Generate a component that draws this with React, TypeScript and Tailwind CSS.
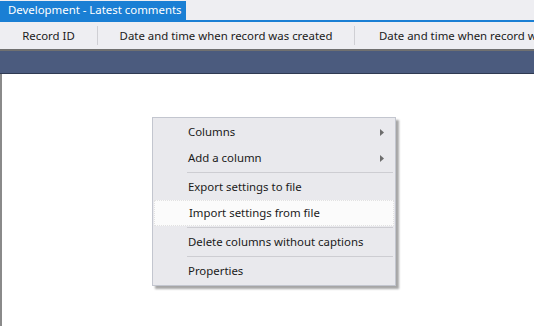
import React from 'react';

const font = { fontFamily: '"Noto Sans", "Open Sans", sans-serif' };

const Arrow: React.FC = () => (
  <svg width="4" height="7" viewBox="0 0 4 7" className="fill-[#6d6d6d]">
    <path d="M0 0 L4 3.5 L0 7 Z" />
  </svg>
);

type Item = { label: string; sub?: boolean; hot?: boolean; sep?: boolean };

const items: Item[] = [
  { label: 'Columns', sub: true },
  { label: 'Add a column', sub: true, sep: true },
  { label: 'Export settings to file' },
  { label: 'Import settings from file', hot: true, sep: true },
  { label: 'Delete columns without captions', sep: true },
  { label: 'Properties' },
];

const App: React.FC = () => {
  return (
    <div className="w-[534px] h-[326px] bg-white flex flex-col overflow-hidden text-[11.4px] text-[#1a1a1a] relative" style={font}>
      {/* tab strip */}
      <div className="h-[22px] shrink-0 bg-[#eeeef2] flex items-end border-b-2 border-[#1a7fd4]">
        <div className="h-[19px] w-[186px] shrink-0 bg-[#1a7fd4] text-white pl-[8px] leading-[18px] whitespace-nowrap overflow-hidden">
          Development - Latest comments
        </div>
      </div>

      {/* column headers, last one runs off the right edge */}
      <div className="h-[27px] shrink-0 bg-[#eeeef2] flex items-center whitespace-nowrap">
        <div className="w-[97px] shrink-0 text-center">Record ID</div>
        <div className="w-px shrink-0 h-[19px] bg-[#cfcfd4]" />
        <div className="w-[256px] shrink-0 text-center">Date and time when record was created</div>
        <div className="w-px shrink-0 h-[19px] bg-[#cfcfd4]" />
        <div className="pl-[24px] shrink-0">Date and time when record was created</div>
      </div>

      {/* band */}
      <div className="h-[25px] shrink-0 bg-[#4b5b7e] border-t-2 border-[#707070] border-b border-b-[#2f3a52]" />

      {/* body */}
      <div className="flex-1 border-l-2 border-[#8a8a8a]" />

      {/* context menu */}
      <div className="absolute left-[152px] top-[117px] w-[244px] bg-[#e9e9ed] border border-[#c3c6cf] shadow-[3px_3px_2px_rgba(0,0,0,0.35)] py-[1px]">
        {items.map((it) => (
          <div key={it.label}>
            <div
              className={`h-[26px] flex items-center pl-[34px] pr-[10px] mx-[1px] ${
                it.hot ? 'bg-[#fbfbfb] border border-dotted border-[#e2e2e2]' : ''
              }`}
            >
              <span className="flex-1 whitespace-nowrap">{it.label}</span>
              {it.sub && <Arrow />}
            </div>
            {it.sep && <div className="h-px bg-[#cdcdd2] ml-[34px] mr-[2px] my-[1px]" />}
          </div>
        ))}
      </div>
    </div>
  );
};

export default App;
